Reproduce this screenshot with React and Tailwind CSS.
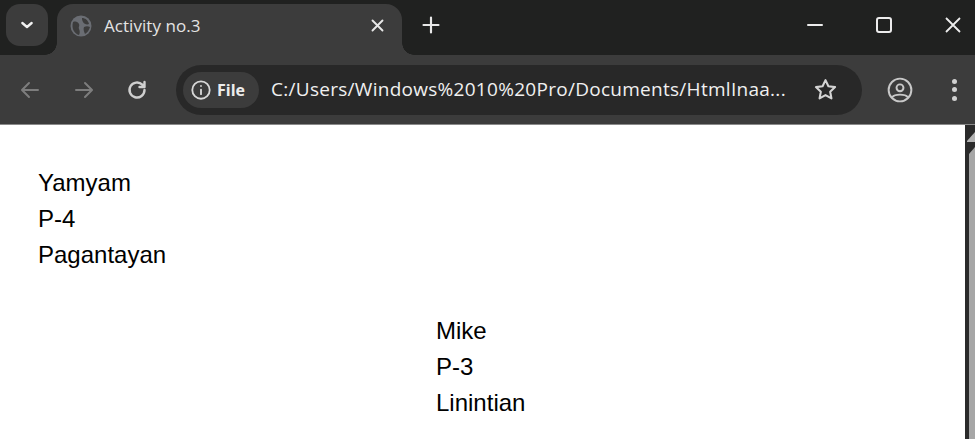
import React from 'react';

const Icon = ({ className, children, size = 24 }) => (
  <svg viewBox="0 0 24 24" width={size} height={size} fill="none" stroke="currentColor" strokeWidth="2" strokeLinecap="round" strokeLinejoin="round" className={className}>
    {children}
  </svg>
);

const TitleBar = () => (
  <div className="flex h-[55px] bg-[#202120] items-start">
    {/* tab search */}
    <div className="mt-[4px] ml-[6px] w-[42px] h-[42px] rounded-[14px] bg-[#3c3c3c] flex items-center justify-center text-[#f2f2f2]">
      <Icon size={16} className="stroke-[3.5]"><path d="M5 9l7 6 7-6" /></Icon>
    </div>

    {/* active tab */}
    <div className="relative ml-[9px] mt-[4px] w-[345px] h-[51px] rounded-t-[16px] bg-[#3c3c3c] flex items-center pl-[13px] pb-[8px]">
      <div className="absolute left-[-12px] bottom-0 w-[12px] h-[12px] bg-[radial-gradient(circle_at_0_0,#202120_11.5px,#3c3c3c_12px)]" />
      <div className="absolute right-[-12px] bottom-0 w-[12px] h-[12px] bg-[radial-gradient(circle_at_100%_0,#202120_11.5px,#3c3c3c_12px)]" />
      <svg viewBox="0 0 22 22" width="22" height="22" className="shrink-0">
        <circle cx="11" cy="11" r="10.5" fill="#6a6d73" />
        <path d="M3 7c3-1 5 0 6 2s-1 3 0 5 1 4 0 6C5 19 1 14 3 7zM12 3c3 0 6 2 7 6-2 1-5 0-6-2s-1-3-1-4zM14 12c2-1 4-1 6 0-1 3-2 5-5 7-1-2-2-5-1-7z" fill="#3c3c3c" />
      </svg>
      <span className="ml-[12px] text-[17px] leading-none text-[#e4e4e4] font-['Open_Sans',sans-serif] tracking-[0.05px]">Activity no.3</span>
      <div className="ml-auto mr-[17px] text-[#e8e8e8]">
        <Icon size={15} className="stroke-[3]"><path d="M4 4l16 16M20 4L4 20" /></Icon>
      </div>
    </div>

    <div className="ml-[19px] mt-[15px] text-[#e8e8e8]">
      <Icon size={20} className="stroke-[2.6]"><path d="M12 3v18M3 12h18" /></Icon>
    </div>

    {/* window controls */}
    <div className="ml-auto flex items-center h-[50px] text-[#ececec]">
      <svg width="16" height="2" className="mr-[53px]"><rect width="16" height="2" rx="1" fill="currentColor" /></svg>
      <div className="w-[16px] h-[16px] rounded-[3px] border-2 border-[#ececec] mr-[53px]" />
      <svg width="16" height="16" viewBox="0 0 16 16" className="mr-[14px]"><path d="M1 1l14 14M15 1L1 15" stroke="currentColor" strokeWidth="1.8" /></svg>
    </div>
  </div>
);

const Toolbar = () => (
  <div className="flex items-center h-[70px] bg-[#3c3c3c] border-b border-[#8a8a8a]">
    <div className="ml-[18px] text-[#7d7d7d]">
      <Icon><path d="M20 12H5M11 5l-7 7 7 7" /></Icon>
    </div>
    <div className="ml-[30px] text-[#7d7d7d]">
      <Icon><path d="M4 12h15M13 5l7 7-7 7" /></Icon>
    </div>
    <div className="ml-[29px] text-[#cfcfcf]">
      <Icon size={24} className="stroke-[2.4]"><path d="M19.5 12a7.5 7.5 0 1 1-2.2-5.3L19.5 9M19.5 4v5h-5" /></Icon>
    </div>

    {/* address bar */}
    <div className="ml-[27px] w-[686px] h-[50px] rounded-full bg-[#282828] flex items-center pl-[7px]">
      <div className="w-[76px] h-[36px] rounded-full bg-[#3c3c3c] flex items-center pl-[7px] text-[#d8d8d8]">
        <Icon size={22}>
          <circle cx="12" cy="12" r="9.5" />
          <path d="M12 11.5v5M12 7.5v.2" />
        </Icon>
        <span className="ml-[5px] text-[16px] font-bold text-[#ececec] font-['Open_Sans',sans-serif] leading-none">File</span>
      </div>
      <span className="ml-[12px] text-[19px] leading-none text-[#f0f0f0] whitespace-nowrap font-['Open_Sans',sans-serif] tracking-[0.28px]">C:/Users/Windows%2010%20Pro/Documents/HtmlInaa...</span>
      <div className="ml-auto mr-[24px] text-[#d4d4d4]">
        <Icon size={25}><path d="M12 3l2.8 5.9 6.4.8-4.7 4.4 1.2 6.4-5.7-3.1-5.7 3.1 1.2-6.4-4.7-4.4 6.4-.8z" /></Icon>
      </div>
    </div>

    <div className="ml-[25px] text-[#c8c8c8]">
      <Icon size={26} className="stroke-[1.8]">
        <circle cx="12" cy="12" r="10.5" />
        <circle cx="12" cy="10" r="3.2" />
        <path d="M5 18.5c2-3 12-3 14 0" />
      </Icon>
    </div>
    <div className="ml-[39px] flex flex-col gap-[3.5px]">
      <div className="w-[5px] h-[5px] rounded-full bg-[#d0d0d0]" />
      <div className="w-[5px] h-[5px] rounded-full bg-[#d0d0d0]" />
      <div className="w-[5px] h-[5px] rounded-full bg-[#d0d0d0]" />
    </div>
  </div>
);

const Scrollbar = () => (
  <div className="w-[10px] bg-[#2a2a2a] flex flex-col items-end">
    <svg width="8" height="10" viewBox="0 0 8 10" className="mt-[7px]"><path d="M8 0L0 9v1h8z" fill="#b4b4b4" /></svg>
    <svg width="6" height="7" viewBox="0 0 6 7" className="mt-[5px]"><path d="M6 0L0 7h6z" fill="#a6a6a6" /></svg>
    <div className="w-[6px] flex-1 bg-[#a6a6a6]" />
  </div>
);

const Block = ({ lines, className }) => (
  <div className={className}>
    {lines.map((line) => (
      <div key={line} className="h-[36px] leading-[36px]">{line}</div>
    ))}
  </div>
);

const App = () => {
  return (
    <div className="w-[975px] h-[439px] overflow-hidden flex flex-col bg-white">
      <TitleBar />
      <Toolbar />
      <div className="flex-1 flex min-h-0">
        <main className="flex-1 bg-white text-[24px] text-[#000] font-['Liberation_Sans',sans-serif] pt-[40px]">
          <Block lines={['Yamyam', 'P-4', 'Pagantayan']} className="ml-[38px]" />
          <Block lines={['Mike', 'P-3', 'Linintian']} className="ml-[436px] mt-[40px]" />
        </main>
        <Scrollbar />
      </div>
    </div>
  );
};

export default App;
